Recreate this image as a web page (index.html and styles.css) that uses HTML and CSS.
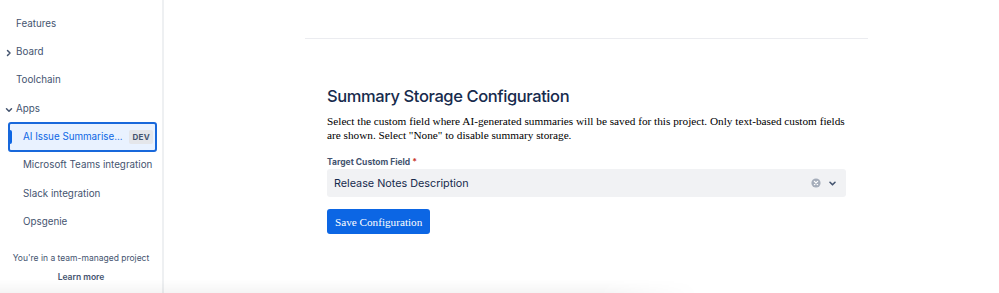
FILE: index.html
```html
<!DOCTYPE html>
<html lang="en">
<head>
    <meta charset="UTF-8">
    <meta name="viewport" content="width=device-width, initial-scale=1.0">
    <title>AI Issue Summariser - Settings</title>
    <link rel="stylesheet" href="styles.css">
</head>
<body>
    <div class="layout">
        <aside class="sidebar">
            <nav class="nav">
                <a class="nav-item">Features</a>
                <a class="nav-item has-toggle">
                    <svg class="toggle" width="8" height="8" viewBox="0 0 8 8"><path d="M2.5 1.5 L5 4 L2.5 6.5" fill="none" stroke="#44546f" stroke-width="1.5" stroke-linecap="round" stroke-linejoin="round"/></svg>
                    Board
                </a>
                <a class="nav-item">Toolchain</a>
                <a class="nav-item has-toggle">
                    <svg class="toggle" width="8" height="8" viewBox="0 0 8 8"><path d="M1.5 2.8 L4 5.3 L6.5 2.8" fill="none" stroke="#44546f" stroke-width="1.5" stroke-linecap="round" stroke-linejoin="round"/></svg>
                    Apps
                </a>
                <a class="nav-item sub active">
                    <span class="nav-label">AI Issue Summarise...</span>
                    <span class="badge">DEV</span>
                </a>
                <a class="nav-item sub">Microsoft Teams integration</a>
                <a class="nav-item sub">Slack integration</a>
                <a class="nav-item sub">Opsgenie</a>
            </nav>
            <div class="sidebar-footer">
                <p>You're in a team-managed project</p>
                <a class="learn-more">Learn more</a>
            </div>
        </aside>

        <main class="main">
            <div class="content">
                <hr class="divider">
                <section class="config">
                    <h2>Summary Storage Configuration</h2>
                    <p class="description">Select the custom field where AI-generated summaries will be saved for this project. Only text-based custom fields are shown. Select "None" to disable summary storage.</p>
                    <label class="field-label">Target Custom Field <span class="required">*</span></label>
                    <div class="select">
                        <span class="select-value">Release Notes Description</span>
                        <span class="select-icons">
                            <svg width="10" height="10" viewBox="0 0 10 10"><circle cx="5" cy="5" r="4.6" fill="#a5adba"/><path d="M3.4 3.4 L6.6 6.6 M6.6 3.4 L3.4 6.6" stroke="#fff" stroke-width="1.3" stroke-linecap="round"/></svg>
                            <svg width="9" height="9" viewBox="0 0 9 9"><path d="M2 3.3 L4.5 5.8 L7 3.3" fill="none" stroke="#44546f" stroke-width="1.6" stroke-linecap="round" stroke-linejoin="round"/></svg>
                        </span>
                    </div>
                    <button class="save-btn">Save Configuration</button>
                </section>
            </div>
        </main>
    </div>
    <div class="bottom-shade"></div>
</body>
</html>
```

FILE: styles.css
```css
body {
    margin: 0;
    padding: 0;
    font-family: Inter, "Noto Sans", sans-serif;
    background-color: #fff;
    color: #172b4d;
    height: 293px;
    overflow: hidden;
}

.layout {
    display: flex;
    height: 293px;
}

.sidebar {
    width: 162px;
    flex-shrink: 0;
    border-right: 2px solid #eef0f2;
    display: flex;
    flex-direction: column;
}

.nav {
    display: flex;
    flex-direction: column;
    padding: 9px 0 0 8px;
    width: 149px;
}

.nav-item {
    display: flex;
    align-items: center;
    height: 28.4px;
    box-sizing: border-box;
    padding-left: 6px;
    border: 2px solid transparent;
    border-radius: 3px;
    font-size: 9.8px;
    color: #44546f;
    white-space: nowrap;
    position: relative;
}

.nav-item.has-toggle .toggle {
    position: absolute;
    left: -5px;
    top: 10px;
}

.nav-item.sub {
    padding-left: 13px;
}

.nav-item.active {
    height: 30px;
    margin: -1px 0 0 0;
    border-color: #1868db;
    background-color: #e9f2ff;
    color: #0c66e4;
    justify-content: space-between;
    padding-right: 2px;
}

.nav-item.active + .nav-item {
    margin-top: -1px;
}

.nav-item.active::before {
    content: "";
    position: absolute;
    left: 0;
    top: 6px;
    bottom: 6px;
    width: 2px;
    border-radius: 0 2px 2px 0;
    background-color: #0c66e4;
}

.badge {
    background-color: #e4e6ea;
    color: #44546f;
    font-size: 8px;
    font-weight: 700;
    padding: 2px 3px;
    border-radius: 2px;
    letter-spacing: 0.3px;
}

.sidebar-footer {
    margin-top: auto;
    margin-bottom: 11px;
    text-align: center;
    font-size: 8.5px;
    color: #44546f;
}

.sidebar-footer p {
    margin: 0 0 9px 0;
}

.learn-more {
    font-weight: 600;
}

.main {
    flex: 1;
    padding-left: 10px;
}

.content {
    max-width: 563px;
    margin: 0 auto;
    padding-top: 38px;
}

.divider {
    margin: 0;
    border: none;
    border-top: 1px solid #ebecf0;
}

.config {
    padding: 46px 22px 0 22px;
}

.config h2 {
    margin: 0;
    font-size: 16.5px;
    font-weight: 500;
    letter-spacing: -0.4px;
    color: #172b4d;
    line-height: 22px;
}

.description {
    font-family: "Liberation Serif", serif;
    font-size: 11.25px;
    line-height: 14px;
    color: #000;
    margin: 7px -6px 15px 0;
}

.field-label {
    display: block;
    font-size: 8.5px;
    font-weight: 700;
    color: #44546f;
    margin-bottom: 2px;
}

.required {
    color: #c9372c;
}

.select {
    display: flex;
    align-items: center;
    justify-content: space-between;
    height: 28px;
    background-color: #f1f2f4;
    border-radius: 3px;
    padding: 0 9px 0 7px;
    font-size: 10.8px;
    color: #172b4d;
}

.select-icons {
    display: flex;
    align-items: center;
    gap: 7px;
}

.select-icons svg {
    display: block;
}

.save-btn {
    margin-top: 12px;
    background-color: #0c66e4;
    color: #fff;
    border: none;
    border-radius: 3px;
    height: 25px;
    padding: 0 8px;
    font-family: "Liberation Serif", serif;
    font-size: 11.2px;
    cursor: pointer;
}

.bottom-shade {
    position: absolute;
    left: 0;
    right: 0;
    bottom: 0;
    height: 14px;
    background: linear-gradient(to bottom, rgba(0, 0, 0, 0), rgba(0, 0, 0, 0.04));
    -webkit-mask-image: linear-gradient(to right, #000 60%, transparent 70%);
    mask-image: linear-gradient(to right, #000 60%, transparent 70%);
    pointer-events: none;
}
```
